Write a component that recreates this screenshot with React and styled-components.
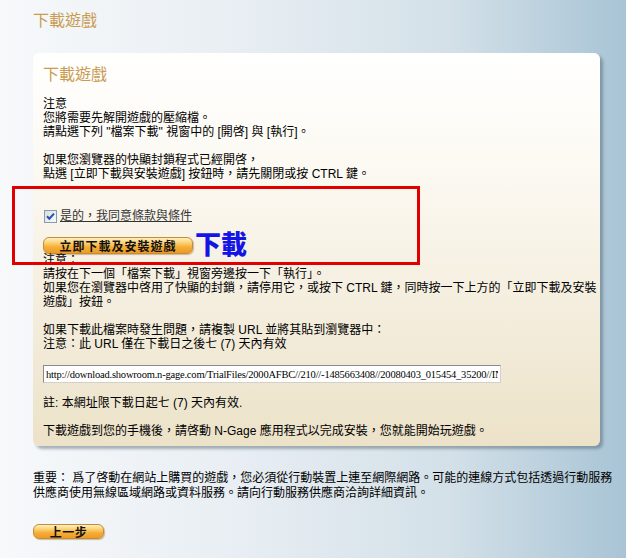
import React from "react";
import styled, { createGlobalStyle } from "styled-components";

const GlobalStyle = createGlobalStyle`
  html, body {
    margin: 0;
    padding: 0;
  }
  body {
    width: 626px;
    height: 558px;
    overflow: hidden;
    background: linear-gradient(to right, #f7f9fb 0%, #e8eef3 38%, #d3e0e8 72%, #a8c4d5 100%);
    font-family: "Liberation Sans", "Noto Sans CJK TC", sans-serif;
    font-size: 12px;
    color: #000;
  }
`;

const Page = styled.div`
  padding: 11px 26px 0 33px;
`;

const Title = styled.h1`
  margin: 0;
  font-size: 16px;
  line-height: 20px;
  font-weight: normal;
  color: #c99c52;
`;

const Panel = styled.section`
  position: relative;
  box-sizing: border-box;
  width: 567px;
  margin-top: 22px;
  padding: 12px 1px 8px 10px;
  border-radius: 6px;
  background: linear-gradient(to bottom, #fffffe 0%, #fcf9f2 30%, #f3ecdb 70%, #ece2c8 100%);
  box-shadow: 3px 3px 3px rgba(70, 90, 105, 0.45);
`;

const PanelTitle = styled(Title)`
  margin-bottom: 12px;
`;

const Para = styled.p`
  margin: ${(p) => p.$top || 0}px 0 0 0;
  line-height: 14px;
`;

const AgreeRow = styled.label`
  display: flex;
  align-items: center;
  gap: 3px;
  height: 16px;
  margin-top: 27px;
  margin-left: 1px;
`;

const AgreeText = styled.span`
  color: #333;
  text-decoration: underline;
  line-height: 16px;
`;

const OrangeButton = styled.button`
  display: block;
  box-sizing: border-box;
  width: ${(p) => p.$w}px;
  height: ${(p) => p.$h}px;
  margin: ${(p) => p.$top}px 0 0 ${(p) => p.$left || 0}px;
  padding: 0;
  border: 1px solid #c98a34;
  border-radius: 6px;
  background: linear-gradient(to bottom, #fff1bf 0%, #fbd47a 30%, #f5ae38 60%, #ee9a22 100%);
  box-shadow: 1px 1px 1px rgba(120, 80, 20, 0.35);
  font-family: "Noto Sans CJK TC", sans-serif;
  font-size: 12px;
  font-weight: bold;
  letter-spacing: ${(p) => p.$ls}px;
  line-height: ${(p) => p.$h - 2}px;
  color: #111;
  text-align: center;
`;

const UrlBox = styled.input`
  display: block;
  box-sizing: border-box;
  width: 458px;
  height: 18px;
  margin: 14px 0 0 0;
  padding: 0 2px;
  border: 1px solid #8a8a8a;
  border-right-color: #d4d0c8;
  border-bottom-color: #d4d0c8;
  background: #fff;
  font-family: "Liberation Serif", serif;
  font-size: 10.5px;
  color: #000;
  letter-spacing: -0.2px;
`;

const RedFrame = styled.div`
  position: absolute;
  left: -21px;
  top: 133px;
  box-sizing: border-box;
  width: 408px;
  height: 79px;
  border: 3px solid #e00000;
  pointer-events: none;
`;

const BlueNote = styled.span`
  position: absolute;
  left: 180px;
  top: 41px;
  font-family: "Noto Sans CJK TC", sans-serif;
  font-size: 26px;
  line-height: 26px;
  font-weight: 900;
  color: #1414e6;
`;

const Footer = styled.div`
  width: 588px;
  margin-top: 25px;
  line-height: 15px;
`;

function Checkbox() {
  return (
    <svg width="13" height="13" viewBox="0 0 13 13">
      <defs>
        <linearGradient id="cb" x1="0" y1="0" x2="1" y2="1">
          <stop offset="0" stopColor="#dcdcd6" />
          <stop offset="1" stopColor="#fbfbf9" />
        </linearGradient>
      </defs>
      <rect x="0.5" y="0.5" width="12" height="12" fill="url(#cb)" stroke="#7f9db9" />
      <path d="M3 6.3 L5.3 8.7 L10 3.6" stroke="#2450b8" strokeWidth="2" fill="none" />
    </svg>
  );
}

export default function App() {
  const url =
    "http://download.showroom.n-gage.com/TrialFiles/2000AFBC//210//-1485663408//20080403_015454_35200//INSTALL.sis";
  return (
    <>
      <GlobalStyle />
      <Page>
        <Title>下載遊戲</Title>
        <Panel>
          <PanelTitle as="h2">下載遊戲</PanelTitle>
          <Para>
            注意
            <br />
            您將需要先解開遊戲的壓縮檔。
            <br />
            請點選下列 "檔案下載" 視窗中的 [開啓] 與 [執行]。
          </Para>
          <Para $top={14}>
            如果您瀏覽器的快顯封鎖程式已經開啓，
            <br />
            點選 [立即下載與安裝遊戲] 按鈕時，請先關閉或按 CTRL 鍵。
          </Para>
          <AgreeRow>
            <Checkbox />
            <AgreeText>是的，我同意條款與條件</AgreeText>
          </AgreeRow>
          <OrangeButton $w={150} $h={17} $top={13} $ls={1}>
            立即下載及安裝遊戲
          </OrangeButton>
          <Para $top={-1}>
            注意：
            <br />
            請按在下一個「檔案下載」視窗旁邊按一下「執行」。
            <br />
            如果您在瀏覽器中啓用了快顯的封鎖，請停用它，或按下 CTRL 鍵，同時按一下上方的「立即下載及安裝遊戲」按鈕。
          </Para>
          <Para $top={14}>
            如果下載此檔案時發生問題，請複製 URL 並將其貼到瀏覽器中：
            <br />
            注意：此 URL 僅在下載日之後七 (7) 天內有效
          </Para>
          <UrlBox type="text" readOnly value={url} />
          <Para $top={13}>註: 本網址限下載日起七 (7) 天內有效.</Para>
          <Para $top={14}>下載遊戲到您的手機後，請啓動 N-Gage 應用程式以完成安裝，您就能開始玩遊戲。</Para>
          <RedFrame>
            <BlueNote>下載</BlueNote>
          </RedFrame>
        </Panel>
        <Footer>
          重要： 爲了啓動在網站上購買的遊戲，您必須從行動裝置上連至網際網路。可能的連線方式包括透過行動服務供應商使用無線區域網路或資料服務。請向行動服務供應商洽詢詳細資訊。
        </Footer>
        <OrangeButton $w={71} $h={15} $top={23} $ls={0.5}>
          上一步
        </OrangeButton>
      </Page>
    </>
  );
}
